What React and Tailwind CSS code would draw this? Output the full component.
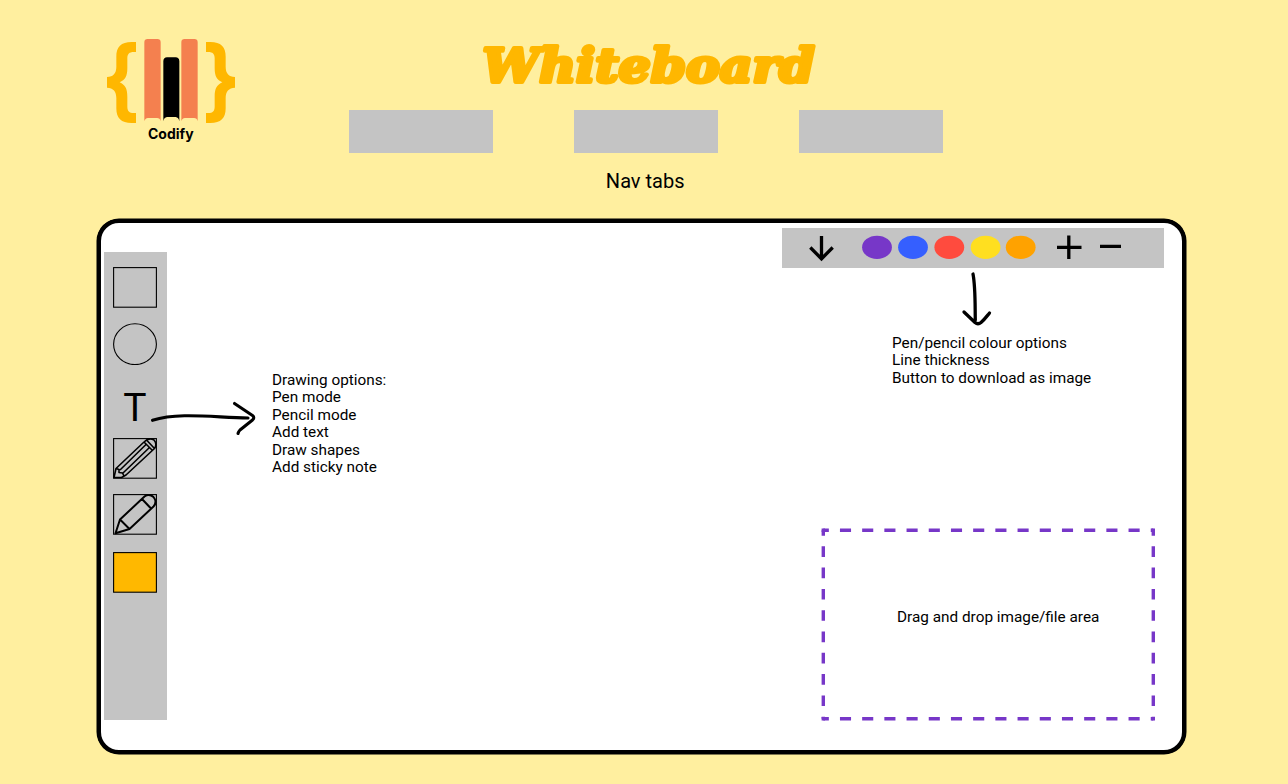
const BRACE =
  "M123 51H110C78 51 64 66 64 95V125C64 145 55 155 36 156V188C55 189 64 199 64 220V250C64 280 78 294 110 294H123V264H116C103 264 97 258 97 245V215C97 190 90 180 74 172C90 165 97 155 97 130V100C97 87 103 81 116 81H123Z";

function Logo() {
  return (
    <div className="flex w-[155px] flex-col items-center">
      <svg className="block h-[99px] w-[155px]" viewBox="0 0 465 297">
        <g fill="#ffb700">
          <path d={BRACE} />
          <path d={BRACE} transform="matrix(-1 0 0 1 456 0)" />
        </g>
        <g fill="#f4804f">
          <path d="M148 289V52Q148 42 158 42H187Q197 42 197 52V289Q195 279 186 279H159Q150 280 148 289Z" />
          <path d="M259 289V52Q259 42 269 42H298Q308 42 308 52V289Q306 279 297 279H270Q261 280 259 289Z" />
        </g>
        <path d="M205 289V108Q206 97 216 97H242Q252 97 253 108V289Q251 277 242 276H216Q207 277 205 289Z" />
      </svg>
      <div className="-mt-[1px] w-[155px] pl-[53px] font-['Inter',sans-serif] text-[14px] font-bold leading-[22px] text-black">
        Codify
      </div>
    </div>
  );
}

function SquareTool({ className, fill = "none", children }) {
  return (
    <svg className={`block h-[41px] w-[44px] shrink-0 ${className}`} viewBox="0 0 44 41" fill="none" stroke="#000">
      <rect x="0.6" y="0.6" width="42.8" height="39.6" fill={fill} strokeWidth="1.1" />
      {children}
    </svg>
  );
}

function Sidebar() {
  return (
    <div className="flex h-[468px] w-[63px] shrink-0 flex-col items-center bg-[#c4c4c4] pr-px">
      <SquareTool className="mt-[15px]" />
      <svg className="mt-[15px] block h-[42px] w-[44px] shrink-0" viewBox="0 0 44 42" fill="none" stroke="#000">
        <ellipse cx="22" cy="21.200" rx="21.4" ry="20.4" strokeWidth="1.1" />
      </svg>
      <div className="mt-[23px] h-[40px] text-[39px] leading-[40px]">T</div>
      <SquareTool className="mt-[10px]">
        <g strokeWidth="1.6" strokeLinejoin="round">
          <path d="M1 39.500L3 30.500L31 4Q36 -1 41 2Q44.500 6 41.500 10.500L13 37L8.500 39.500Z" />
          <path d="M3 30.500L6 31.500L6 34.500L9.500 35L11 38M7 32L33 6.500M10 35L37 9M31 4L39.500 12.500M33.500 2L41.500 10.500" />
        </g>
      </SquareTool>
      <SquareTool className="mt-[15px]">
        <path
          d="M2.500 39.200L7 25.500L31.500 2.500Q36 -1 40.500 3Q44.500 8 40.500 12.500L16.500 35ZM7 25.500L16.500 35M29 5L38 14.500"
          strokeWidth="2"
          strokeLinejoin="round"
        />
      </SquareTool>
      <SquareTool className="mt-[17px]" fill="#ffb800" />
    </div>
  );
}

const SWATCHES = [
  { cx: 95, fill: "#7737c8" },
  { cx: 131, fill: "#355fff" },
  { cx: 167.300, fill: "#ff4b3e" },
  { cx: 203.600, fill: "#ffdf20" },
  { cx: 238.700, fill: "#ffa200" },
];

function Toolbar() {
  return (
    <div className="h-[39.500px] w-[382px] bg-[#c4c4c4]">
      <svg className="block h-[39px] w-[382px]" viewBox="0 0 382 39" fill="none" stroke="#000" strokeWidth="3.300">
        <path d="M39.500 8V30.500M28.300 19.500L39.500 30.800L50.700 19.500" />
        {SWATCHES.map((s) => (
          <ellipse key={s.cx} cx={s.cx} cy="19.300" rx="14.900" ry="11.600" fill={s.fill} stroke="none" />
        ))}
        <path d="M286.800 7.600V31M275 19.300H299.500M318 18.300H339" />
      </svg>
    </div>
  );
}

export default function App() {
  return (
    <div className="flex h-[784px] w-[1288px] flex-col overflow-hidden bg-[#ffef9f] font-['Roboto',sans-serif] text-black">
      <header className="flex h-[219px] pl-[95px]">
        <div className="pt-[25px]">
          <Logo />
        </div>
        <div className="flex flex-col items-center pl-[99px]">
          <h1 className="mt-[32px] h-[64px]">
            <svg className="block h-[64px] w-[360px]" viewBox="0 0 360 64">
              <text
                x="16.500"
                y="49.500"
                textLength="332"
                lengthAdjust="spacingAndGlyphs"
                strokeLinejoin="round"
                className="fill-[#ffb700] stroke-[#ffb700] stroke-[4px] font-['DejaVu_Serif',serif] text-[46px] font-bold italic"
              >
                Whiteboard
              </text>
            </svg>
          </h1>
          <nav className="mt-[14px] flex gap-[80.600px]">
            <div className="h-[43px] w-[144.400px] bg-[#c4c4c4]" />
            <div className="h-[43px] w-[144.400px] bg-[#c4c4c4]" />
            <div className="h-[43px] w-[144.400px] bg-[#c4c4c4]" />
          </nav>
          <p className="mt-[16px] pr-[2px] text-[20px] leading-[24px]">Nav tabs</p>
        </div>
      </header>

      <main className="ml-[97px] flex h-[535px] w-[1089px] rounded-[22px] border-4 border-black bg-white shadow-[0_0_0_0.500px_#000]">
        <div className="pl-[3px] pt-[29px]">
          <Sidebar />
        </div>
        <svg className="relative z-10 -ml-[18px] mt-[172px] block h-[44px] w-[110px] shrink-0" viewBox="0 0 110 44" fill="none" stroke="#000" strokeWidth="3.100" strokeLinecap="round" strokeLinejoin="round">
          <path d="M3.500 25.300C30 17 65 22.500 99 23M85.500 8.500L103.500 20.500Q106 22.500 103.500 25L91 35Q89.500 36.500 89 38.500" />
        </svg>
        <p className="ml-[13px] mt-[148.600px] w-[300px] shrink-0 text-[15.330px] leading-[17.580px]">
          Drawing options:
          <br />
          Pen mode
          <br />
          Pencil mode
          <br />
          Add text
          <br />
          Draw shapes
          <br />
          Add sticky note
        </p>
        <section className="ml-[210px] flex w-[383px] shrink-0 flex-col pt-[5px]">
          <Toolbar />
          <svg className="ml-[177px] mt-[2.500px] block h-[60px] w-[40px] shrink-0" viewBox="0 0 40 60" fill="none" stroke="#000" strokeWidth="3.300" strokeLinecap="round" strokeLinejoin="round">
            <path d="M14 4C16.500 17 16 34 16.300 50M5 42L16 52.500Q19 55 22 52.500C26 49 28 46 30.500 43" />
          </svg>
          <p className="ml-[110px] mt-[4.600px] text-[15.330px] leading-[17.580px]">
            Pen/pencil colour options
            <br />
            Line thickness
            <br />
            Button to download as image
          </p>
          <div className="ml-[39px] mt-[139.400px] grid h-[194px] w-[334px]">
            <svg className="col-start-1 row-start-1 block h-[194px] w-[334px]" viewBox="0 0 334 194" fill="none" stroke="#7737c8">
              <path d="M2.300 3.300H332.300M2.300 191.800H332.300" strokeWidth="3.400" strokeDasharray="11.100" strokeDashoffset="5.550" />
              <path d="M2.300 3.300V191.800M332.300 3.300V191.800" strokeWidth="3.400" strokeDasharray="10.650" strokeDashoffset="5.300" />
              <path d="M0.600 3.300H4M330.600 3.300H334M0.600 191.800H4M330.600 191.800H334" strokeWidth="3.400" />
            </svg>
            <p className="col-start-1 row-start-1 pl-[76px] pt-[81px] text-[15.330px] leading-[18px]">Drag and drop image/file area</p>
          </div>
        </section>
      </main>
    </div>
  );
}
